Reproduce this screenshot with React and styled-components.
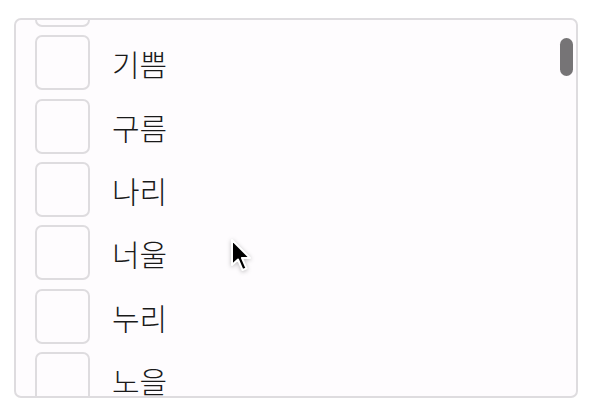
import React, { useLayoutEffect, useRef } from "react";
import styled, { createGlobalStyle } from "styled-components";

const GlobalStyle = createGlobalStyle`
  html, body {
    margin: 0;
    padding: 0;
    background: #ffffff;
  }
  body {
    font-family: "Noto Sans CJK KR", "Noto Sans", sans-serif;
  }
`;

const Page = styled.div`
  width: 593px;
  height: 404px;
  padding: 18px 15px 10px 14px;
  box-sizing: border-box;
  position: relative;
`;

const Frame = styled.div`
  position: relative;
  height: 100%;
  border: 2px solid #dedcdf;
  border-radius: 7px;
  background: #fefcfe;
  overflow: hidden;
`;

const Scroller = styled.div`
  height: 100%;
  overflow-y: scroll;
  scrollbar-width: none;
  &::-webkit-scrollbar {
    display: none;
  }
`;

const List = styled.ul`
  list-style: none;
  margin: 0;
  padding: 8px 19px;
  display: flex;
  flex-direction: column;
  gap: 8.33px;
`;

const Row = styled.li`
  display: flex;
  align-items: center;
  gap: 22px;
`;

const Box = styled.span`
  flex: none;
  width: 55px;
  height: 55px;
  box-sizing: border-box;
  border: 2px solid #dedcdf;
  border-radius: 7px;
  background: #fefcfe;
`;

const Label = styled.span`
  font-size: 30px;
  font-weight: 300;
  line-height: 1;
  color: #1a1a1a;
  padding-top: 1px;
`;

const Thumb = styled.div`
  position: absolute;
  top: 18px;
  right: 3px;
  width: 13px;
  height: 38px;
  border-radius: 7px;
  background: #767476;
`;

const Cursor = styled.svg`
  position: absolute;
  left: 229px;
  top: 238px;
  filter: drop-shadow(0 1px 2px rgba(0, 0, 0, 0.25));
`;

const words = ["하늘", "기쁨", "구름", "나리", "너울", "누리", "노을", "다솜", "마루", "보람"];

export default function App() {
  const ref = useRef(null);
  useLayoutEffect(() => {
    if (ref.current) ref.current.scrollTop = 56;
  }, []);
  return (
    <>
      <GlobalStyle />
      <Page>
        <Frame>
          <Scroller ref={ref}>
            <List>
              {words.map(w => (
                <Row key={w}>
                  <Box />
                  <Label>{w}</Label>
                </Row>
              ))}
            </List>
          </Scroller>
          <Thumb />
        </Frame>
        <Cursor width="24" height="36" viewBox="0 0 24 36">
          <path
            d="M3 2 L3 27 L9 21.5 L13.5 32 L17.5 30.3 L13 20 L21 20 Z"
            fill="#000"
            stroke="#fff"
            strokeWidth="2"
            strokeLinejoin="round"
          />
        </Cursor>
      </Page>
    </>
  );
}
